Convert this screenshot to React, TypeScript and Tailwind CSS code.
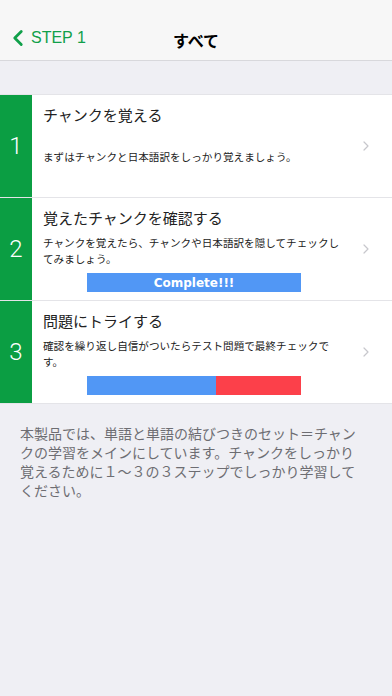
import { ChevronLeft, ChevronRight } from 'lucide-react';

const FONT = '"Noto Sans CJK JP", "Noto Sans", sans-serif';

type Step = {
  num: string;
  title: string;
  desc: string;
  bar: 'none' | 'complete' | 'split';
};

const STEPS: Step[] = [
  { num: '1', title: 'チャンクを覚える', desc: 'まずはチャンクと日本語訳をしっかり覚えましょう。', bar: 'none' },
  {
    num: '2',
    title: '覚えたチャンクを確認する',
    desc: 'チャンクを覚えたら、チャンクや日本語訳を隠してチェックしてみましょう。',
    bar: 'complete',
  },
  {
    num: '3',
    title: '問題にトライする',
    desc: '確認を繰り返し自信がついたらテスト問題で最終チェックです。',
    bar: 'split',
  },
];

function StepRow({ step }: { step: Step }) {
  return (
    <div className="flex h-[103px] border-b border-[#e4e4e8] bg-white">
      <div className="flex w-[32px] shrink-0 items-center justify-center bg-[#0b9e43]">
        <span className="text-[24px] font-light text-white" style={{ fontFamily: '"Roboto", sans-serif' }}>
          {step.num}
        </span>
      </div>
      <div className="flex min-w-0 flex-1 flex-col pl-[11px] pr-[10px] pt-[10px]">
        <div className="text-[15px] leading-[20px] text-[#222]">{step.title}</div>
        {step.bar === 'none' ? (
          <div className="mt-[24px] text-[10.6px] leading-[16px] text-[#222]">{step.desc}</div>
        ) : (
          <>
            <div className="mt-[7px] text-[10.6px] leading-[16px] text-[#222]">{step.desc}</div>
            {step.bar === 'complete' ? (
              <div
                className="ml-[44px] mt-[6px] flex h-[19px] w-[214px] items-center justify-center bg-[#5197f5] text-[12px] font-bold text-white"
                style={{ fontFamily: '"DejaVu Sans", sans-serif' }}
              >
                Complete!!!
              </div>
            ) : (
              <div className="ml-[44px] mt-[6px] flex h-[19px] w-[214px]">
                <div className="w-[129px] bg-[#5197f5]" />
                <div className="flex-1 bg-[#fc404a]" />
              </div>
            )}
          </>
        )}
      </div>
      <div className="flex w-[34px] shrink-0 items-center">
        <ChevronRight className="h-[16px] w-[16px] text-[#c7c7cc]" strokeWidth={1.8} />
      </div>
    </div>
  );
}

export default function App() {
  return (
    <div className="min-h-[696px] bg-[#efeff4]" style={{ fontFamily: FONT }}>
      <header className="relative flex h-[61px] items-end border-b border-[#d8d8dc] bg-[#f7f7f7] pb-[9px]">
        <div className="flex items-center pl-[5px] text-[#10a04a]">
          <ChevronLeft className="h-[26px] w-[26px]" strokeWidth={2.6} />
          <span className="text-[16px] leading-[22px]" style={{ fontFamily: '"Liberation Sans", sans-serif' }}>
            STEP 1
          </span>
        </div>
        <div className="absolute inset-x-0 bottom-[9px] text-center text-[16px] font-bold leading-[22px] text-black">
          すべて
        </div>
      </header>
      <div className="h-[33px]" />
      <div className="border-t border-[#e4e4e8]">
        {STEPS.map((s) => (
          <StepRow key={s.num} step={s} />
        ))}
      </div>
      <p className="pl-[20px] pr-[28px] pt-[20px] text-[14px] leading-[19px] text-[#6d6d72]">
        本製品では、単語と単語の結びつきのセット＝チャンクの学習をメインにしています。チャンクをしっかり覚えるために１〜３の３ステップでしっかり学習してください。
      </p>
    </div>
  );
}
